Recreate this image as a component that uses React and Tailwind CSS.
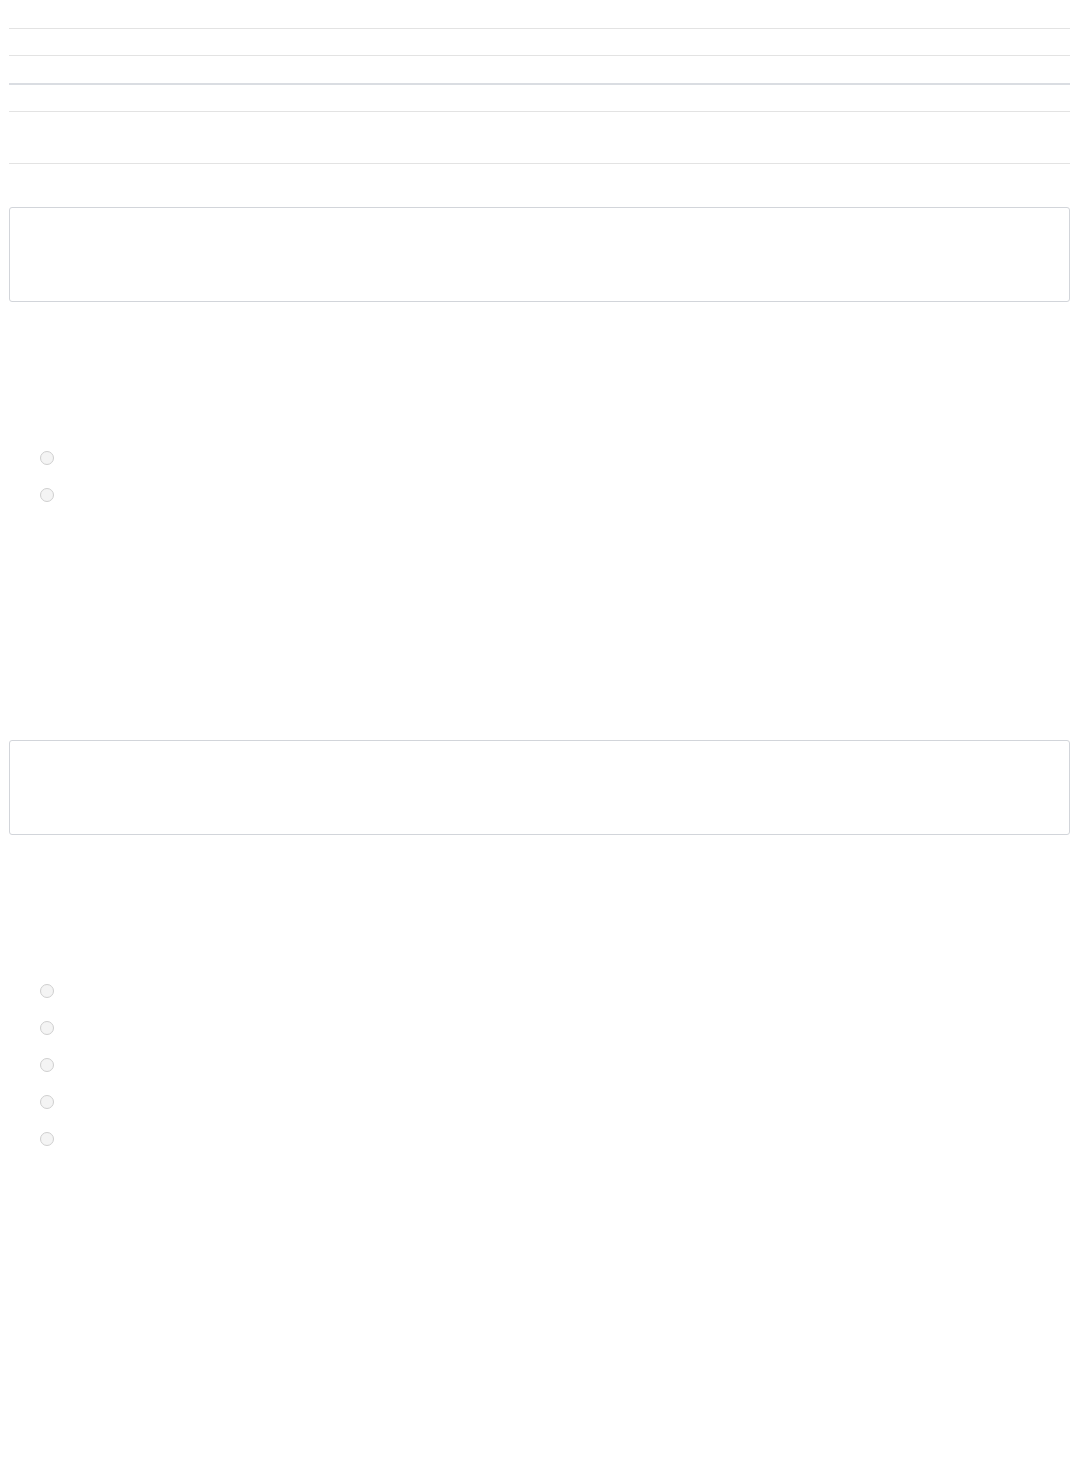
export default function App() {
  const Radio = () => (
    <div className="h-[37px] flex items-start">
      <div className="ml-[31px] w-[14px] h-[14px] rounded-full border border-[#cfcfcf] bg-[#f4f4f4]" />
    </div>
  );
  return (
    <div className="min-h-[1481px] bg-white pl-[9px] pr-[8px] font-['Liberation_Sans',sans-serif]">
      <div className="h-[28px]" />
      <div className="border-t border-[#e3e3e3] h-[27px]" />
      <div className="border-t border-[#e3e3e3] h-[28px]" />
      <div className="border-t-2 border-[#dadde2] h-[28px]" />
      <div className="border-t border-[#e3e3e3] h-[52px]" />
      <div className="border-t border-[#e3e3e3] h-[44px]" />
      <div className="h-[95px] rounded-[3px] border border-[#d2d5da] bg-white" />
      <div className="h-[149px]" />
      <Radio />
      <Radio />
      <div className="h-[215px]" />
      <div className="h-[95px] rounded-[3px] border border-[#d2d5da] bg-white" />
      <div className="h-[149px]" />
      <Radio />
      <Radio />
      <Radio />
      <Radio />
      <Radio />
    </div>
  );
}
